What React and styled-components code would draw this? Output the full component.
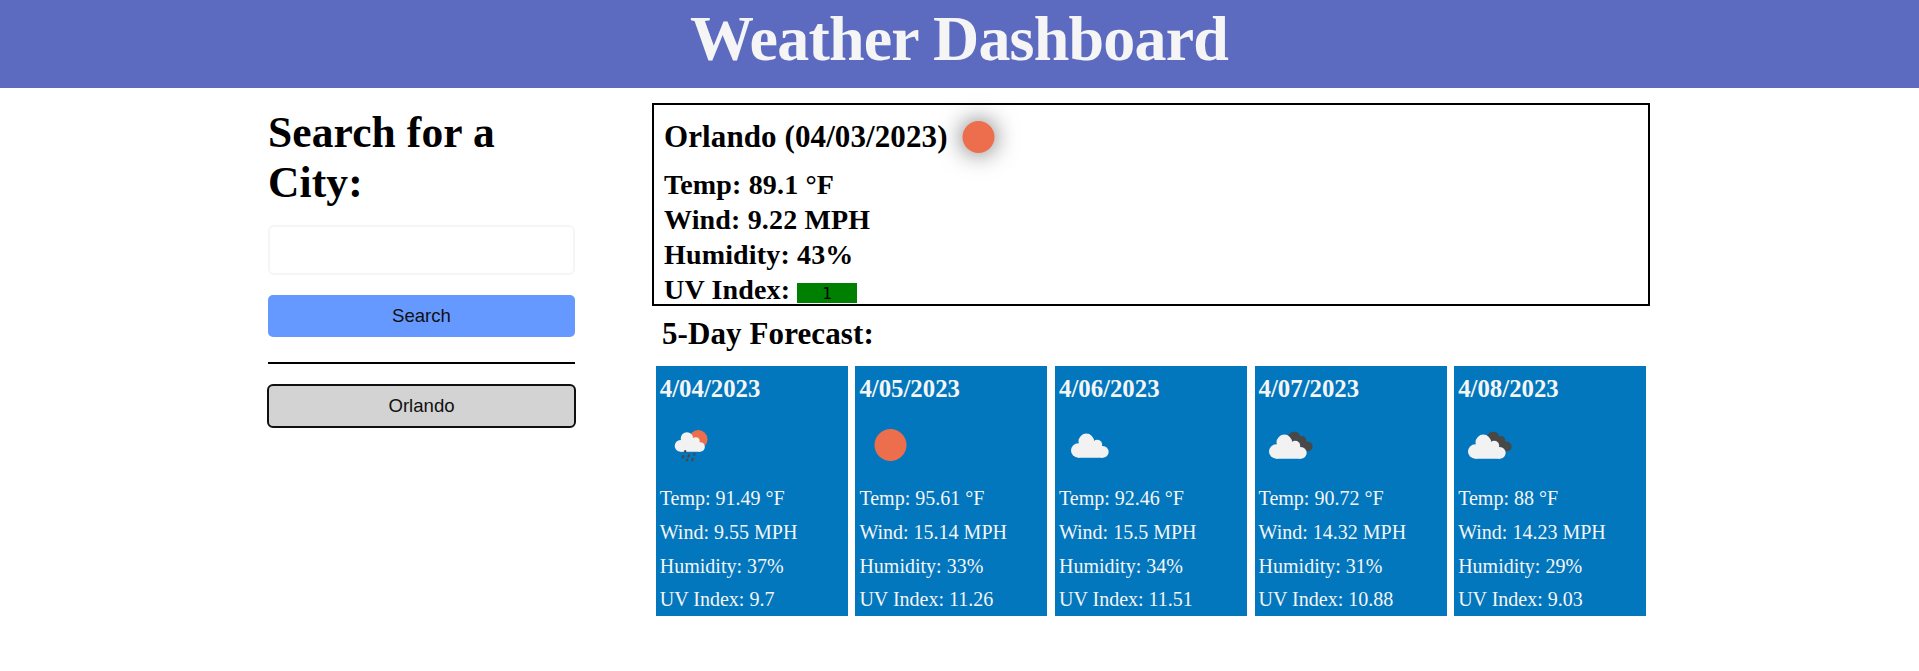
import React from "react";
import styled, { createGlobalStyle } from "styled-components";

const GlobalStyle = createGlobalStyle`
  * { box-sizing: border-box; margin: 0; padding: 0; }
  body { margin: 0; background: #fff; color: #000; font-family: "Liberation Serif", "Times New Roman", serif; overflow: hidden; }
`;

const Header = styled.header`
  height: 88px;
  background: #5c6bc0;
  color: #f5f5f5;
  text-align: center;
`;
const Title = styled.h1`
  font-size: 64px;
  line-height: 78px;
  letter-spacing: -0.8px;
  padding-right: 1px;
`;
const Main = styled.main`
  display: grid;
  grid-template-columns: 307px 998px;
  column-gap: 77px;
  padding: 15px 0 0 268px;
  align-items: start;
`;
const Sidebar = styled.aside`
  display: flex;
  flex-direction: column;
`;
const SearchTitle = styled.h2`
  font-size: 43.5px;
  line-height: 50px;
  letter-spacing: 0.1px;
  padding-top: 4px;
`;
const SearchInput = styled.input`
  width: 100%;
  height: 50px;
  margin-top: 18px;
  border: 2px solid #f5f5f5;
  border-radius: 6px;
  background: #fff;
`;
const Button = styled.button`
  width: 100%;
  height: 42px;
  margin-top: ${(p) => (p.$city ? 21 : 20)}px;
  border: 0;
  border-radius: 5px;
  background: ${(p) => (p.$city ? "#d3d3d3" : "#6699ff")};
  color: #101010;
  font-family: "Liberation Sans", Arial, sans-serif;
  font-size: 18.6px;
  outline: ${(p) => (p.$city ? "2px solid #101010" : "none")};
  outline-offset: -1px;
`;
const Divider = styled.hr`
  border: 0;
  height: 2px;
  margin-top: 25px;
  background: #000;
`;
const Current = styled.section`
  height: 203px;
  border: 2px solid #000;
  padding: 0 10px;
`;
const CityRow = styled.div`
  display: flex;
  align-items: center;
  height: 63px;
  margin-bottom: -1px;
`;
const City = styled.h2`
  font-size: 31px;
  line-height: 36px;
  letter-spacing: 0.1px;
`;
const SunIcon = styled.svg`
  width: 64px;
  height: 64px;
  flex: none;
  margin-left: -0.5px;
  filter: drop-shadow(0 0 12px rgba(0, 0, 0, 0.6));
`;
const Reading = styled.p`
  font-size: 28px;
  font-weight: 700;
  line-height: 35px;
  letter-spacing: 0.16px;
  display: flex;
  align-items: flex-end;
`;
const UvBadge = styled.span`
  width: 60px;
  height: 20px;
  margin: 0 0 4px 7px;
  background: #008000;
  font: 400 15.5px/22px "DejaVu Sans", sans-serif;
  text-align: center;
`;
const ForecastTitle = styled.h2`
  font-size: 31px;
  line-height: 36px;
  letter-spacing: 0.1px;
  padding: 10px 0 14px 10px;
`;
const Cards = styled.div`
  display: grid;
  grid-template-columns: repeat(5, 192px);
  column-gap: 7.6px;
  padding-left: 3.8px;
`;
const Card = styled.article`
  height: 250px;
  padding: 8px 4px 0;
  background: #0277bd;
  color: #f5f5f5;
`;
const Day = styled.h3`
  font-size: 24.8px;
  line-height: 29px;
`;
const Icon = styled.svg`
  display: block;
  width: 64px;
  height: 64px;
  margin: 10px 0 5px;
`;
const Stat = styled.p`
  font-size: 20px;
  line-height: 33.8px;
`;

function Cloud({ transform }) {
  return (
    <g transform={transform} fill="#f2f2f2">
      <circle cx="27.3" cy="28.4" r="7.8" />
      <circle cx="19.2" cy="37.5" r="7.2" />
      <circle cx="38.2" cy="31.8" r="5" />
      <circle cx="43.8" cy="38.8" r="5.9" />
      <path d="M20 31h18l6 3v10.7H19.2z" />
    </g>
  );
}
const Sun = () => <circle cx="31.5" cy="32" r="16" fill="#ec6e4c" />;

function WeatherIcon({ kind }) {
  return (
    <Icon viewBox="0 0 64 64">
      {kind === "sun" && <Sun />}
      {kind === "cloud" && <Cloud />}
      {kind === "clouds" && (
        <>
          <path
            fill="#484848"
            d="M29 24.5a6.3 6.3 0 0 1 12.3-1.2c3.6-.9 6.4 1.5 6 5.2 3.8-.3 6.300 2 6.300 5.100 0 2.900-2.200 4.900-5 4.900z"
          />
          <Cloud transform="translate(-2 1)" />
        </>
      )}
      {kind === "rain" && (
        <>
          <circle cx="38.3" cy="26.2" r="9.2" fill="#ec6e4c" />
          <Cloud transform="translate(5.1 2.5) scale(.8 .81)" />
          <path
            d="M25.2 38v.8M29 42.2l-.7 1.3M23.300 43.200l-.6 1.300M34.400 41l-.3.700M27.300 46.700l-.3.700M32.700 46l-.5 1.300"
            stroke="#484848"
            strokeWidth="2.2"
            strokeLinecap="round"
          />
        </>
      )}
    </Icon>
  );
}

const DAYS = [
  { date: "4/04/2023", icon: "rain", temp: "91.49", wind: "9.55", humidity: 37, uv: "9.7" },
  { date: "4/05/2023", icon: "sun", temp: "95.61", wind: "15.14", humidity: 33, uv: "11.26" },
  { date: "4/06/2023", icon: "cloud", temp: "92.46", wind: "15.5", humidity: 34, uv: "11.51" },
  { date: "4/07/2023", icon: "clouds", temp: "90.72", wind: "14.32", humidity: 31, uv: "10.88" },
  { date: "4/08/2023", icon: "clouds", temp: "88", wind: "14.23", humidity: 29, uv: "9.03" },
];

export default function App() {
  return (
    <>
      <GlobalStyle />
      <Header>
        <Title>Weather Dashboard</Title>
      </Header>
      <Main>
        <Sidebar>
          <SearchTitle>Search for a City:</SearchTitle>
          <SearchInput aria-label="City" />
          <Button>Search</Button>
          <Divider />
          <Button $city>Orlando</Button>
        </Sidebar>
        <div>
          <Current>
            <CityRow>
              <City>Orlando (04/03/2023)</City>
              <SunIcon viewBox="0 0 64 64">
                <Sun />
              </SunIcon>
            </CityRow>
            <Reading>Temp: 89.1 °F</Reading>
            <Reading>Wind: 9.22 MPH</Reading>
            <Reading>Humidity: 43%</Reading>
            <Reading>
              UV Index:<UvBadge>1</UvBadge>
            </Reading>
          </Current>
          <ForecastTitle>5-Day Forecast:</ForecastTitle>
          <Cards>
            {DAYS.map((d) => (
              <Card key={d.date}>
                <Day>{d.date}</Day>
                <WeatherIcon kind={d.icon} />
                <Stat>Temp: {d.temp} °F</Stat>
                <Stat>Wind: {d.wind} MPH</Stat>
                <Stat>Humidity: {d.humidity}%</Stat>
                <Stat>UV Index: {d.uv}</Stat>
              </Card>
            ))}
          </Cards>
        </div>
      </Main>
    </>
  );
}
